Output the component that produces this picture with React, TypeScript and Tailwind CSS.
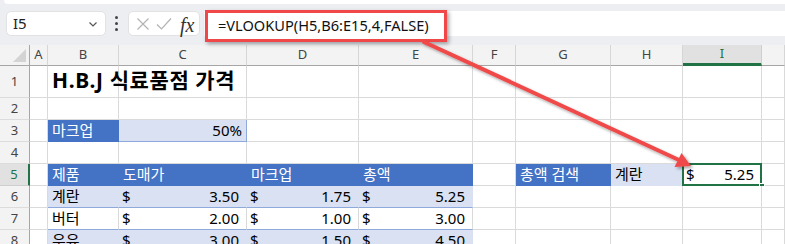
import React from "react";

const W = [30, 18, 71, 128, 112, 114, 43, 95, 72, 79, 23];
const FONT = '"Noto Sans", "Noto Sans CJK KR", sans-serif';

type C = { c?: React.ReactNode; k?: string };

function Acc({ v }: { v: string }) {
  return (
    <div className="flex w-full justify-between pl-[3px] pr-[7px]">
      <span>$</span>
      <span>{v}</span>
    </div>
  );
}

function Row({ n, h, cells, sel }: { n: number; h: string; cells: C[]; sel?: boolean }) {
  return (
    <div className={`relative flex ${h}`}>
      <div
        className={`box-border flex shrink-0 items-center justify-center border-b text-[13px] ${
          sel
            ? "border-b-[#cfcfcf] border-r-2 border-r-[#217346] bg-[#e1e1e1] text-[#217346]"
            : "border-b-[#dcdcdc] border-r border-r-[#a6a6a6] bg-[#f3f3f3] text-[#444]"
        }`}
        style={{ width: W[0] }}
      >
        {n}
      </div>
      {cells.map((cell, i) => (
        <div
          key={i}
          className={`box-border flex shrink-0 items-center overflow-visible whitespace-nowrap ${
            cell.k ?? "border-b border-r border-[#dadada] bg-white"
          }`}
          style={{ width: W[i + 1] }}
        >
          {cell.c}
        </div>
      ))}
    </div>
  );
}

const E: C = {};
const blank = (n: number): C[] => Array.from({ length: n }, () => E);

const HDR = "border-b border-r border-[#4472c4] bg-[#4472c4] text-white pl-[4px]";
const BAND = "border-b border-r border-b-[#8ea9db] border-r-[#d9e1f2] bg-[#d9e1f2]";
const PLAIN = "border-b border-r border-b-[#8ea9db] border-r-[#dadada] bg-white";

export default function App() {
  const letters = ["A", "B", "C", "D", "E", "F", "G", "H", "I", ""];
  const dataRows: { n: number; name: string; a: string; b: string; c: string; band: boolean }[] = [
    { n: 6, name: "계란", a: "3.50", b: "1.75", c: "5.25", band: true },
    { n: 7, name: "버터", a: "2.00", b: "1.00", c: "3.00", band: false },
    { n: 8, name: "우유", a: "3.00", b: "1.50", c: "4.50", band: true },
  ];
  return (
    <div
      className="relative h-[244px] w-[785px] overflow-hidden bg-white text-[15px] text-black"
      style={{ fontFamily: FONT }}
    >
      {/* formula bar area */}
      <div className="relative h-[45px] bg-[#eceef2]">
        <div className="absolute left-[4px] right-0 top-0 h-[4px] rounded-bl-[6px] bg-white" />
        <div className="absolute left-[6px] top-[11px] flex h-[25px] w-[100px] items-center justify-between rounded-[5px] border border-[#e2e2e2] bg-white pl-[6px] pr-[6px] text-[15px] text-[#222]">
          <span>I5</span>
          <svg width="12" height="12" viewBox="0 0 12 12" fill="none" stroke="#555" strokeWidth="1.2">
            <path d="M2.5 4.5 L6 8 L9.5 4.5" />
          </svg>
        </div>
        <div className="absolute left-[115px] top-[16px] flex flex-col gap-[3px]">
          <div className="h-[3px] w-[3px] rounded-full bg-[#444]" />
          <div className="h-[3px] w-[3px] rounded-full bg-[#444]" />
          <div className="h-[3px] w-[3px] rounded-full bg-[#444]" />
        </div>
        <div className="absolute left-[128px] top-[11px] flex h-[25px] w-[72px] items-center rounded-[5px] border border-[#e2e2e2] bg-white">
          <svg className="absolute left-[7px] top-[5px]" width="14" height="14" viewBox="0 0 14 14" fill="none" stroke="#b3b3b3" strokeWidth="1.2">
            <path d="M1.5 1.5 L12.5 12.5 M12.5 1.5 L1.5 12.5" />
          </svg>
          <svg className="absolute left-[27px] top-[5px]" width="16" height="14" viewBox="0 0 16 14" fill="none" stroke="#b3b3b3" strokeWidth="1.2">
            <path d="M1 7.5 L5.5 12 L15 1.5" />
          </svg>
          <span
            className="absolute left-[51px] top-[-2px] text-[20px] italic text-[#333]"
            style={{ fontFamily: '"Liberation Serif", serif' }}
          >
            fx
          </span>
        </div>
        <div className="absolute left-[204px] right-0 top-[11px] h-[25px] bg-white" />
        <div className="absolute left-[205px] top-[10px] flex h-[32px] w-[242px] items-center border-[3px] border-[#f04848] bg-white pl-[10px] text-[14.6px] text-[#111] shadow-[2px_2px_4px_rgba(0,0,0,0.35)]">
          =VLOOKUP(H5,B6:E15,4,FALSE)
        </div>
      </div>

      {/* column headers */}
      <div className="flex h-[21px]">
        <div
          className="relative box-border shrink-0 border-b border-r border-b-[#a6a6a6] border-r-[#a6a6a6] bg-[#f3f3f3]"
          style={{ width: W[0] }}
        >
          <div className="absolute bottom-[3px] right-[3px] h-0 w-0 border-b-[13px] border-l-[13px] border-b-[#d4d4d4] border-l-transparent" />
        </div>
        {letters.map((l, i) => (
          <div
            key={i}
            className={`box-border flex shrink-0 items-center justify-center border-r text-[13px] ${
              l === "I"
                ? "border-b-[3px] border-b-[#217346] border-r-[#cfcfcf] bg-[#e1e1e1] text-[#217346]"
                : "border-b border-b-[#a6a6a6] border-r-[#d6d6d6] bg-[#f3f3f3] text-[#444]"
            }`}
            style={{ width: W[i + 1] }}
          >
            {l}
          </div>
        ))}
      </div>

      {/* rows */}
      <Row
        n={1}
        h="h-[32px]"
        cells={[
          E,
          {
            c: (
              <span className="relative z-10 self-end pb-[3px] pl-[4px] text-[21px] font-bold leading-[27px] tracking-[0.6px]">
                H.B.J 식료품점 가격
              </span>
            ),
          },
          ...blank(8),
        ]}
      />
      <Row n={2} h="h-[22px]" cells={blank(10)} />
      <Row
        n={3}
        h="h-[22px]"
        cells={[
          E,
          { c: "마크업", k: "border-b border-r border-[#4472c4] bg-[#4472c4] text-white pl-[4px]" },
          {
            c: <span className="w-full pr-[4px] text-right">50%</span>,
            k: "border-b border-r border-[#8ea9db] bg-[#d9e1f2]",
          },
          ...blank(7),
        ]}
      />
      <Row n={4} h="h-[22px]" cells={blank(10)} />
      <Row
        n={5}
        h="h-[22px]"
        sel
        cells={[
          E,
          { c: "제품", k: HDR },
          { c: "도매가", k: HDR },
          { c: "마크업", k: HDR },
          { c: "총액", k: HDR },
          E,
          { c: "총액 검색", k: HDR },
          { c: "계란", k: "border-b border-r border-[#d9e1f2] bg-[#d9e1f2] pl-[4px]" },
          {
            c: (
              <div className="relative flex h-full w-full items-center">
                <div className="pointer-events-none absolute inset-[-1px] border-2 border-[#217346]" />
                <div className="absolute bottom-[-4px] right-[-4px] h-[6px] w-[6px] border border-white bg-[#217346]" />
                <Acc v="5.25" />
              </div>
            ),
            k: "border-b border-r border-[#dadada] bg-white",
          },
          E,
        ]}
      />
      {dataRows.map((r) => {
        const k = r.band ? BAND : PLAIN;
        return (
          <Row
            key={r.n}
            n={r.n}
            h="h-[22px]"
            cells={[
              E,
              { c: <span className="pl-[4px]">{r.name}</span>, k },
              { c: <Acc v={r.a} />, k },
              { c: <Acc v={r.b} />, k },
              { c: <Acc v={r.c} />, k },
              ...blank(5),
            ]}
          />
        );
      })}

      {/* arrow */}
      <svg className="pointer-events-none absolute left-0 top-0" width="785" height="244">
        <defs>
          <filter id="sh" x="-20%" y="-20%" width="140%" height="140%">
            <feDropShadow dx="2" dy="2" stdDeviation="1.5" floodColor="#000" floodOpacity="0.35" />
          </filter>
        </defs>
        <g filter="url(#sh)">
          <line x1="424" y1="42" x2="679" y2="160" stroke="#f04848" strokeWidth="4" strokeLinecap="round" />
          <polygon points="691,166 681.5,153 674.5,167" fill="#f04848" />
        </g>
      </svg>
    </div>
  );
}
